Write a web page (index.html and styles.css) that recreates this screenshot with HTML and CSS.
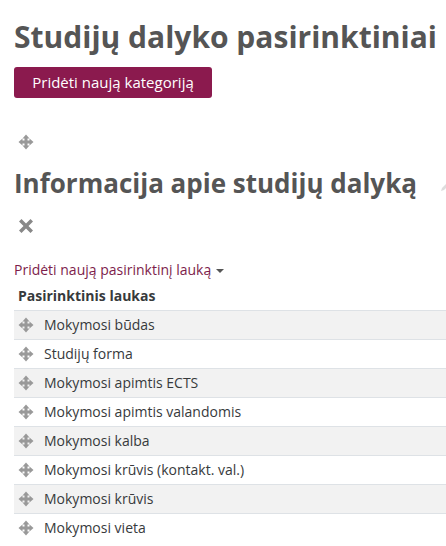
FILE: index.html
```html
<!DOCTYPE html>
<html lang="lt">
<head>
	<meta charset="UTF-8" />
	<meta name="viewport" content="width=device-width, initial-scale=1.0" />
	<title>Studijų dalyko pasirinktiniai</title>
	<link rel="stylesheet" href="styles.css">
</head>
<body>
	<div class="page">
		<h2 class="title">Studijų dalyko pasirinktiniai</h2>
		<button class="btn">Pridėti naują kategoriją</button>

		<div class="category">
			<span class="icon move">
				<svg viewBox="0 0 16 16" width="16" height="16"><path d="M8 0.5 L11.5 4.5 H9.5 V6.5 H11.5 V4.5 L15.5 8 L11.5 11.5 V9.5 H9.5 V11.5 H11.5 L8 15.5 L4.5 11.5 H6.5 V9.5 H4.5 V11.5 L0.5 8 L4.5 4.5 V6.5 H6.5 V4.5 H4.5 Z" fill="#999"/></svg>
			</span>
			<h3 class="cat-name">Informacija apie studijų dalyką <span class="edit"><svg viewBox="0 0 16 16" width="16" height="16"><path d="M3 13 L4 10 L11 3 L13 5 L6 12 Z" fill="#ddd"/></svg></span></h3>
			<span class="icon del">
				<svg viewBox="0 0 16 16" width="16" height="16"><path d="M1 3.5 L3.5 1 L8 5.5 L12.5 1 L15 3.5 L10.5 8 L15 12.5 L12.5 15 L8 10.5 L3.5 15 L1 12.5 L5.5 8 Z" fill="#888"/></svg>
			</span>

			<div class="add-field">
				<a href="#">Pridėti naują pasirinktinį lauką</a> <span class="caret"></span>
			</div>

			<table class="fields">
				<tr class="titles">
					<th>Pasirinktinis laukas</th>
				</tr>
				<tr><td><span class="icon move"><svg viewBox="0 0 16 16" width="16" height="16"><path d="M8 0.5 L11.5 4.5 H9.5 V6.5 H11.5 V4.5 L15.5 8 L11.5 11.5 V9.5 H9.5 V11.5 H11.5 L8 15.5 L4.5 11.5 H6.5 V9.5 H4.5 V11.5 L0.5 8 L4.5 4.5 V6.5 H6.5 V4.5 H4.5 Z" fill="#999"/></svg></span>Mokymosi būdas</td></tr>
				<tr><td><span class="icon move"><svg viewBox="0 0 16 16" width="16" height="16"><path d="M8 0.5 L11.5 4.5 H9.5 V6.5 H11.5 V4.5 L15.5 8 L11.5 11.5 V9.5 H9.5 V11.5 H11.5 L8 15.5 L4.5 11.5 H6.5 V9.5 H4.5 V11.5 L0.5 8 L4.5 4.5 V6.5 H6.5 V4.5 H4.5 Z" fill="#999"/></svg></span>Studijų forma</td></tr>
				<tr><td><span class="icon move"><svg viewBox="0 0 16 16" width="16" height="16"><path d="M8 0.5 L11.5 4.5 H9.5 V6.5 H11.5 V4.5 L15.5 8 L11.5 11.5 V9.5 H9.5 V11.5 H11.5 L8 15.5 L4.5 11.5 H6.5 V9.5 H4.5 V11.5 L0.5 8 L4.5 4.5 V6.5 H6.5 V4.5 H4.5 Z" fill="#999"/></svg></span>Mokymosi apimtis ECTS</td></tr>
				<tr><td><span class="icon move"><svg viewBox="0 0 16 16" width="16" height="16"><path d="M8 0.5 L11.5 4.5 H9.5 V6.5 H11.5 V4.5 L15.5 8 L11.5 11.5 V9.5 H9.5 V11.5 H11.5 L8 15.5 L4.5 11.5 H6.5 V9.5 H4.5 V11.5 L0.5 8 L4.5 4.5 V6.5 H6.5 V4.5 H4.5 Z" fill="#999"/></svg></span>Mokymosi apimtis valandomis</td></tr>
				<tr><td><span class="icon move"><svg viewBox="0 0 16 16" width="16" height="16"><path d="M8 0.5 L11.5 4.5 H9.5 V6.5 H11.5 V4.5 L15.5 8 L11.5 11.5 V9.5 H9.5 V11.5 H11.5 L8 15.5 L4.5 11.5 H6.5 V9.5 H4.5 V11.5 L0.5 8 L4.5 4.5 V6.5 H6.5 V4.5 H4.5 Z" fill="#999"/></svg></span>Mokymosi kalba</td></tr>
				<tr><td><span class="icon move"><svg viewBox="0 0 16 16" width="16" height="16"><path d="M8 0.5 L11.5 4.5 H9.5 V6.5 H11.5 V4.5 L15.5 8 L11.5 11.5 V9.5 H9.5 V11.5 H11.5 L8 15.5 L4.5 11.5 H6.5 V9.5 H4.5 V11.5 L0.5 8 L4.5 4.5 V6.5 H6.5 V4.5 H4.5 Z" fill="#999"/></svg></span>Mokymosi krūvis (kontakt. val.)</td></tr>
				<tr><td><span class="icon move"><svg viewBox="0 0 16 16" width="16" height="16"><path d="M8 0.5 L11.5 4.5 H9.5 V6.5 H11.5 V4.5 L15.5 8 L11.5 11.5 V9.5 H9.5 V11.5 H11.5 L8 15.5 L4.5 11.5 H6.5 V9.5 H4.5 V11.5 L0.5 8 L4.5 4.5 V6.5 H6.5 V4.5 H4.5 Z" fill="#999"/></svg></span>Mokymosi krūvis</td></tr>
				<tr><td><span class="icon move"><svg viewBox="0 0 16 16" width="16" height="16"><path d="M8 0.5 L11.5 4.5 H9.5 V6.5 H11.5 V4.5 L15.5 8 L11.5 11.5 V9.5 H9.5 V11.5 H11.5 L8 15.5 L4.5 11.5 H6.5 V9.5 H4.5 V11.5 L0.5 8 L4.5 4.5 V6.5 H6.5 V4.5 H4.5 Z" fill="#999"/></svg></span>Mokymosi vieta</td></tr>
			</table>
		</div>
	</div>
</body>
</html>
```

FILE: styles.css
```css
body {
	margin: 0;
	font-family: "Open Sans", "Liberation Sans", sans-serif;
	font-size: 14px;
	color: #373a3c;
	background: #fff;
	overflow: hidden;
}

.page {
	padding: 19px 0 0 14px;
	width: 432px;
	overflow: hidden;
}

.title {
	margin: 0 0 12px;
	font-size: 30px;
	line-height: 36px;
	font-weight: 700;
	color: #555;
	white-space: nowrap;
}

.btn {
	display: block;
	background-color: #8b1a4e;
	color: #fff;
	border: 0;
	border-radius: 3px;
	font-family: inherit;
	font-size: 15px;
	line-height: 21px;
	padding: 5px 17px;
	width: 198px;
	height: 31px;
}

.category {
	padding-top: 36px;
}

.icon {
	display: inline-flex;
	width: 16px;
	height: 16px;
	vertical-align: middle;
}

.category > .icon {
	display: flex;
	margin-left: 4px;
}

.cat-name {
	margin: 17px 0 19px;
	font-size: 26px;
	line-height: 32px;
	font-weight: 700;
	color: #555;
	white-space: nowrap;
}

.edit {
	display: inline-flex;
	margin-left: 14px;
	vertical-align: middle;
}

.add-field {
	margin-top: 25px;
	line-height: 21px;
}

.add-field a {
	color: #7d1d4b;
	text-decoration: none;
}

.caret {
	display: inline-block;
	width: 0;
	height: 0;
	border-top: 4px solid #555;
	border-left: 4px solid transparent;
	border-right: 4px solid transparent;
	vertical-align: middle;
	margin-left: 1px;
}

.fields {
	border-collapse: collapse;
	width: 440px;
	margin-top: 2px;
}

.fields th,
.fields td {
	text-align: left;
	padding: 4px;
	line-height: 20px;
}

.fields th {
	font-weight: 700;
	color: #373a3c;
	padding-bottom: 4px;
}

.fields td {
	border-top: 1px solid #dee2e6;
}

.fields tr:nth-child(even) td {
	background-color: #f2f2f2;
}

.fields td .icon {
	margin-right: 10px;
	position: relative;
	top: -1px;
}
```
